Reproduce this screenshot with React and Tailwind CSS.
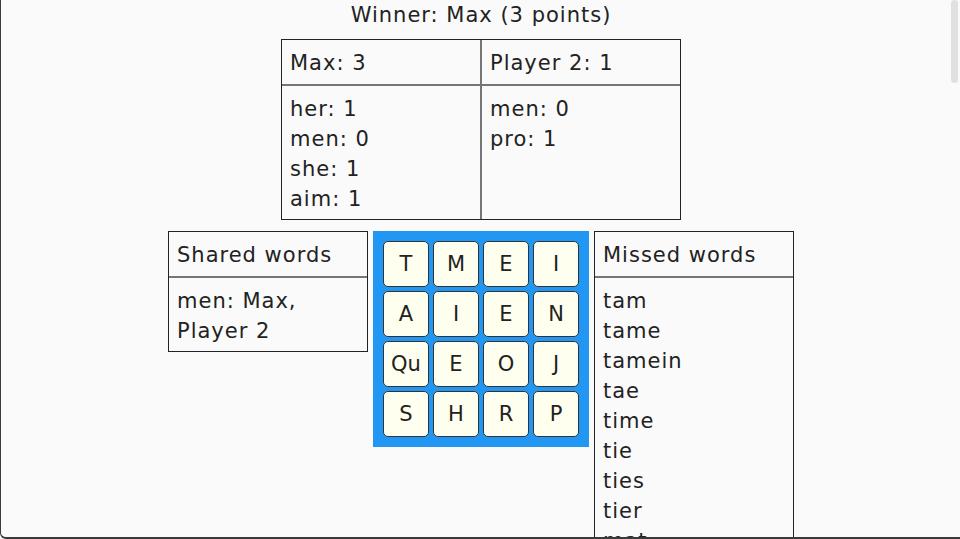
import React from "react";

const tiles = ["T","M","E","I","A","I","E","N","Qu","E","O","J","S","H","R","P"];
const missed = ["tam","tame","tamein","tae","time","tie","ties","tier","mat","mate","meat","meta"];

function Box({ title, children, className = "" }) {
  return (
    <div className={"w-[200px] border border-[#222] bg-[#fafafa] " + className}>
      <div className="h-[44px] flex items-center px-[8px] pt-[1px]">{title}</div>
      <div className="h-[2px] bg-[#767676]" />
      <div className="px-[8px] pt-[8px] pb-[5px]">{children}</div>
    </div>
  );
}

export default function App() {
  return (
    <div
      className="relative w-[960px] h-[539px] overflow-hidden bg-[#fafafa] border-l border-b-2 border-[#3a3a3a] rounded-bl-[6px] text-[#222] text-[21px] tracking-[1px] leading-[30px]"
      style={{ fontFamily: '"DejaVu Sans", "Noto Sans", sans-serif' }}
    >
      <div className="flex flex-col items-center pl-[1px]">
        <div className="h-[30px] text-[21px] leading-[30px]">Winner: Max (3 points)</div>
        <div className="mt-[9px] w-[400px] border border-[#222] flex">
          <div className="w-[198px] flex flex-col">
            <div className="h-[44px] flex items-center px-[8px] pt-[1px]">Max: 3</div>
            <div className="h-[2px] bg-[#767676]" />
            <div className="px-[8px] pt-[8px] pb-[5px] h-[133px]">
              <div>her: 1</div>
              <div>men: 0</div>
              <div>she: 1</div>
              <div>aim: 1</div>
            </div>
          </div>
          <div className="w-[2px] bg-[#767676]" />
          <div className="flex-1 flex flex-col">
            <div className="h-[44px] flex items-center px-[8px] pt-[1px]">Player 2: 1</div>
            <div className="h-[2px] bg-[#767676]" />
            <div className="px-[8px] pt-[8px] pb-[5px]">
              <div>men: 0</div>
              <div>pro: 1</div>
            </div>
          </div>
        </div>
        <div className="mt-[11px] flex items-start">
          <Box title="Shared words">
            <div>men: Max,</div>
            <div>Player 2</div>
          </Box>
          <div className="ml-[5px] mr-[5px] w-[216px] h-[216px] bg-[#2196f3] p-[10px] grid grid-cols-4 gap-[4px]">
            {tiles.map((t, i) => (
              <div
                key={i}
                className="w-[46px] h-[46px] bg-[#fffff0] border border-[#333] rounded-[5px] flex items-center justify-center text-[21px] tracking-normal"
              >
                {t}
              </div>
            ))}
          </div>
          <Box title="Missed words">
            {missed.map((w) => (
              <div key={w}>{w}</div>
            ))}
          </Box>
        </div>
      </div>
      <div className="absolute right-[2px] top-0 w-[7px] h-[83px] rounded-[4px] bg-[#e0e0e0]" />
    </div>
  );
}
